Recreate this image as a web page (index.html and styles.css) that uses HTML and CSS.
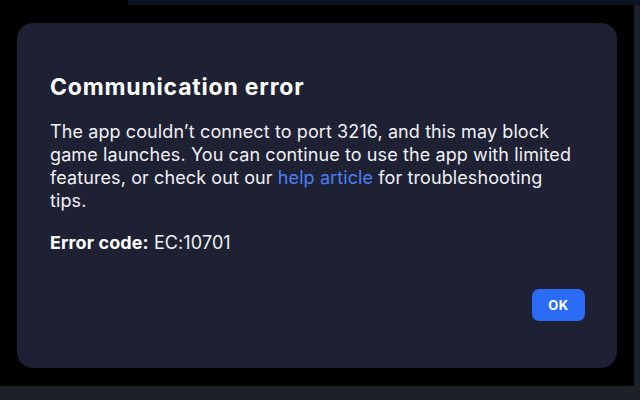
FILE: index.html
```html
<!DOCTYPE html>
<html lang="en">
<head>
  <meta charset="UTF-8" />
  <title>Communication error</title>
  <link rel="stylesheet" href="styles.css">
</head>
<body>
  <div class="top-strip">
    <div class="top-left"></div>
    <div class="top-right"></div>
  </div>
  <div class="middle">
    <main class="overlay">
      <div class="dialog">
        <h1>Communication error</h1>
        <p class="message">The app couldn’t connect to port 3216, and this may block game launches. You can continue to use the app with limited features, or check out our <a href="#">help article</a> for troubleshooting tips.</p>
        <p class="code"><strong>Error code:</strong> EC:10701</p>
        <div class="actions">
          <button type="button">OK</button>
        </div>
      </div>
    </main>
    <div class="side-strip"></div>
  </div>
  <div class="bottom-strip"></div>
</body>
</html>
```

FILE: styles.css
```css
html, body {
  margin: 0;
  padding: 0;
  height: 100%;
  background-color: #000;
  font-family: Inter, "Noto Sans", sans-serif;
  overflow: hidden;
}
body {
  display: flex;
  flex-direction: column;
}
.top-strip {
  height: 5px;
  display: flex;
}
.top-left {
  width: 128px;
  background-color: #000;
}
.top-right {
  flex: 1;
  background-color: #0b1224;
}
.middle {
  flex: 1;
  display: flex;
}
.overlay {
  flex: 1;
  background-color: #000;
  padding: 18px 0 0 17px;
}
.side-strip {
  width: 6px;
  background-color: #1b2029;
}
.bottom-strip {
  height: 14px;
  background-color: #1c2129;
}
.dialog {
  box-sizing: border-box;
  width: 600px;
  height: 345px;
  background-color: #1e2133;
  border-radius: 16px;
  padding: 50px 32px 0 33px;
  color: #f0f0f4;
}
.dialog h1 {
  margin: 0 0 19px;
  font-size: 23px;
  font-weight: 700;
  line-height: 28px;
  letter-spacing: 0.8px;
  color: #fff;
}
.dialog p {
  margin: 0;
  font-size: 18px;
  line-height: 23px;
  letter-spacing: 0.1px;
}
.dialog .message {
  max-width: 527px;
}
.dialog a {
  color: #4c7ff2;
  text-decoration: none;
}
.dialog .code {
  margin-top: 19px;
}
.dialog strong {
  font-weight: 700;
  color: #fff;
}
.actions {
  display: flex;
  justify-content: flex-end;
  margin-top: 35px;
}
.actions button {
  width: 53px;
  height: 32px;
  border: none;
  border-radius: 7px;
  background-color: #2b6cf6;
  color: #fff;
  font-family: Inter, sans-serif;
  font-weight: 700;
  font-size: 13px;
  letter-spacing: 0.5px;
  cursor: pointer;
}
```
